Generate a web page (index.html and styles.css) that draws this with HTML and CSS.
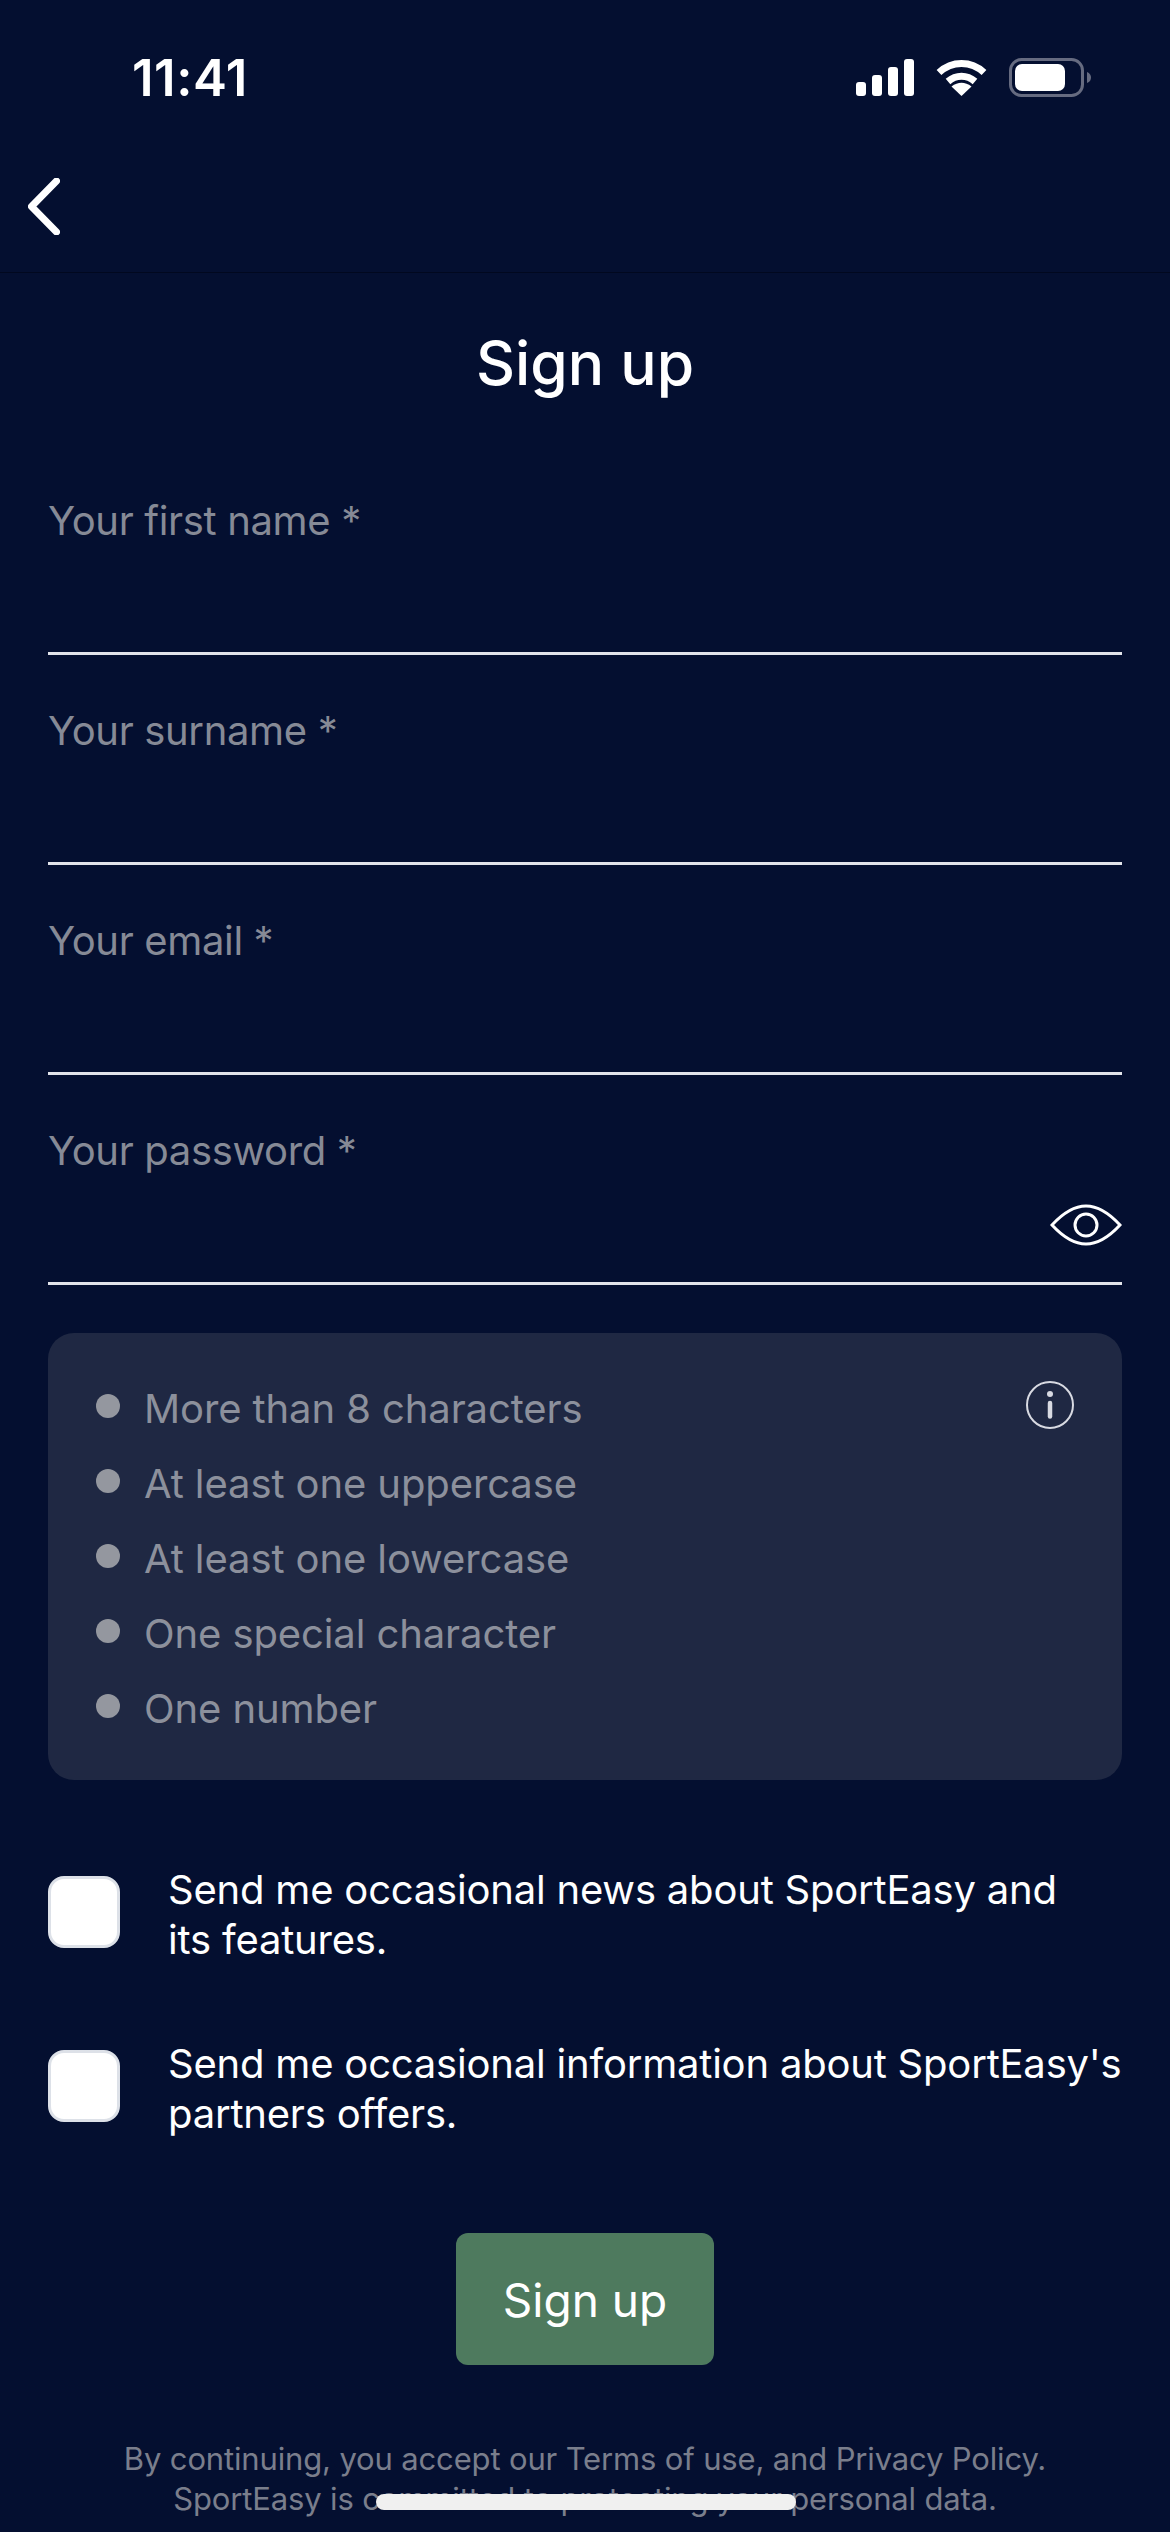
FILE: index.html
```html
<!DOCTYPE html>
<html lang="en">
<head>
<meta charset="utf-8">
<title>Sign up</title>
<link rel="stylesheet" href="styles.css">
</head>
<body>
<div class="screen">
  <div class="status">
    <span class="time">11:41</span>
    <div class="status-icons">
      <svg class="sig" viewBox="0 0 58 37"><rect x="0" y="23" width="10" height="14" rx="3"/><rect x="16" y="16" width="10" height="21" rx="3"/><rect x="32" y="8" width="10" height="29" rx="3"/><rect x="48" y="0" width="10" height="37" rx="3"/></svg>
      <svg class="wifi" viewBox="0 0 51 37"><path class="arc" d="M3 13.5C16 1.500 35 1.500 48 13.500"/><path class="arc" d="M12 22.500C20 15.500 31 15.500 39 22.500"/><path class="wedge" d="M25.500 37L15.500 27.500Q25.500 20 35.500 27.500Z"/></svg>
      <svg class="batt" viewBox="0 0 82 39"><rect class="shell" x="1.500" y="1.500" width="72" height="36" rx="11"/><rect class="level" x="6" y="6" width="50" height="27" rx="7"/><path class="cap" d="M78 14C81 15 82 17.500 82 19.500C82 21.500 81 24 78 25Z"/></svg>
    </div>
  </div>
  <nav class="nav">
    <svg class="back" viewBox="0 0 32 57"><path d="M28.500 3L3.500 28.500L28.500 54"/></svg>
  </nav>
  <main class="main">
    <h1 class="title">Sign up</h1>
    <div class="field"><label class="label">Your first name *</label></div>
    <div class="field"><label class="label">Your surname *</label></div>
    <div class="field"><label class="label">Your email *</label></div>
    <div class="field">
      <label class="label">Your password *</label>
      <div class="field-action">
        <svg class="eye" viewBox="0 0 72 42"><path d="M2 21C14 8 26 2 36 2C46 2 58 8 70 21C58 34 46 40 36 40C26 40 14 34 2 21Z"/><circle cx="36" cy="21" r="11"/></svg>
      </div>
    </div>
    <section class="rules">
      <svg class="info" viewBox="0 0 48 48"><circle class="ring" cx="24" cy="24" r="23"/><circle class="dot" cx="24" cy="13" r="3"/><path class="stem" d="M24 22V35.500"/></svg>
      <div class="rule"><span class="bullet"></span><span class="rule-text">More than 8 characters</span></div>
      <div class="rule"><span class="bullet"></span><span class="rule-text">At least one uppercase</span></div>
      <div class="rule"><span class="bullet"></span><span class="rule-text">At least one lowercase</span></div>
      <div class="rule"><span class="bullet"></span><span class="rule-text">One special character</span></div>
      <div class="rule"><span class="bullet"></span><span class="rule-text">One number</span></div>
    </section>
    <div class="checks">
      <div class="check"><span class="box"></span><p class="check-text">Send me occasional news about SportEasy and<br>its features.</p></div>
      <div class="check"><span class="box"></span><p class="check-text">Send me occasional information about SportEasy's<br>partners offers.</p></div>
    </div>
    <div class="cta"><button class="button">Sign up</button></div>
    <p class="legal">By continuing, you accept our Terms of use, and Privacy Policy.<br>SportEasy is committed to protecting your personal data.</p>
  </main>
  <div class="home"></div>
</div>
</body>
</html>
```
FILE: styles.css
```css
* { box-sizing: border-box; }
html, body { margin: 0; padding: 0; background: #040f30; }
.screen { position: relative; width: 1170px; height: 2532px; overflow: hidden; background: #040f30; color: #fff; font-family: Inter, "Liberation Sans", sans-serif; }
.status { height: 120px; display: flex; justify-content: space-between; padding: 58px 79px 0 132px; }
.time { font-size: 51px; line-height: 40px; font-weight: 600; letter-spacing: 0.500px; }
.status-icons { display: flex; align-items: flex-start; }
.sig { width: 58px; height: 37px; margin-top: 1px; fill: #fff; }
.wifi { width: 51px; height: 37px; margin: 1px 22px 0; }
.wifi .arc { fill: none; stroke: #fff; stroke-width: 7; }
.wifi .wedge { fill: #fff; }
.batt { width: 82px; height: 39px; }
.shell { fill: none; stroke: #666b80; stroke-width: 3; }
.level { fill: #fff; }
.cap { fill: #666b80; }
.nav { height: 153px; padding: 58px 0 0 28px; border-bottom: 1px solid #01081f; }
.back { display: block; width: 32px; height: 57px; fill: none; stroke: #fff; stroke-width: 7; stroke-linecap: round; stroke-linejoin: round; }
.main { padding: 0 48px; }
.title { margin: 0; padding: 56px 0 48px; font-size: 60.500px; line-height: 68px; font-weight: 500; text-align: center; }
.field { height: 210px; padding-top: 51px; border-bottom: 3px solid #e2e4ea; }
.label { display: block; font-size: 40px; line-height: 50px; color: #868a96; letter-spacing: -0.350px; }
.field-action { display: flex; justify-content: flex-end; margin-top: 28px; }
.eye { width: 72px; height: 42px; fill: none; stroke: #fff; stroke-width: 3; }
.rules { position: relative; margin-top: 48px; height: 447px; padding: 36px 48px; background: #1f2843; border-radius: 26px; }
.info { position: absolute; top: 48px; right: 48px; width: 48px; height: 48px; }
.ring { fill: none; stroke: #d8dae2; stroke-width: 2; }
.dot { fill: #d8dae2; }
.stem { fill: none; stroke: #d8dae2; stroke-width: 4.500; stroke-linecap: round; }
.rule { display: flex; align-items: center; height: 75px; font-size: 40px; color: #8c909c; letter-spacing: -0.100px; }
.rule-text { padding-top: 3px; }
.bullet { width: 24px; height: 24px; margin-right: 24px; border-radius: 50%; background: #94979f; position: relative; top: -1px; }
.checks { display: flex; flex-direction: column; gap: 74px; margin-top: 85px; }
.check { display: flex; align-items: center; gap: 48px; }
.box { flex: none; width: 72px; height: 72px; margin-bottom: 6px; background: #fff; border: 3px solid #dde1e8; border-radius: 16px; }
.check-text { margin: 0; font-size: 40px; line-height: 50px; letter-spacing: -0.200px; white-space: nowrap; }
.cta { display: flex; justify-content: center; margin-top: 94px; }
.button { width: 258px; height: 132px; border: 0; border-radius: 12px; background: #4e7a5e; color: #fff; font-family: inherit; font-size: 46px; padding-top: 2px; }
.legal { margin: 74px 0 0; font-size: 31px; line-height: 40px; color: #7a7e8c; text-align: center; letter-spacing: -0.150px; }
.home { position: absolute; left: 376px; top: 2494px; width: 420px; height: 16px; border-radius: 8px; background: #f0f0f0; }
```
